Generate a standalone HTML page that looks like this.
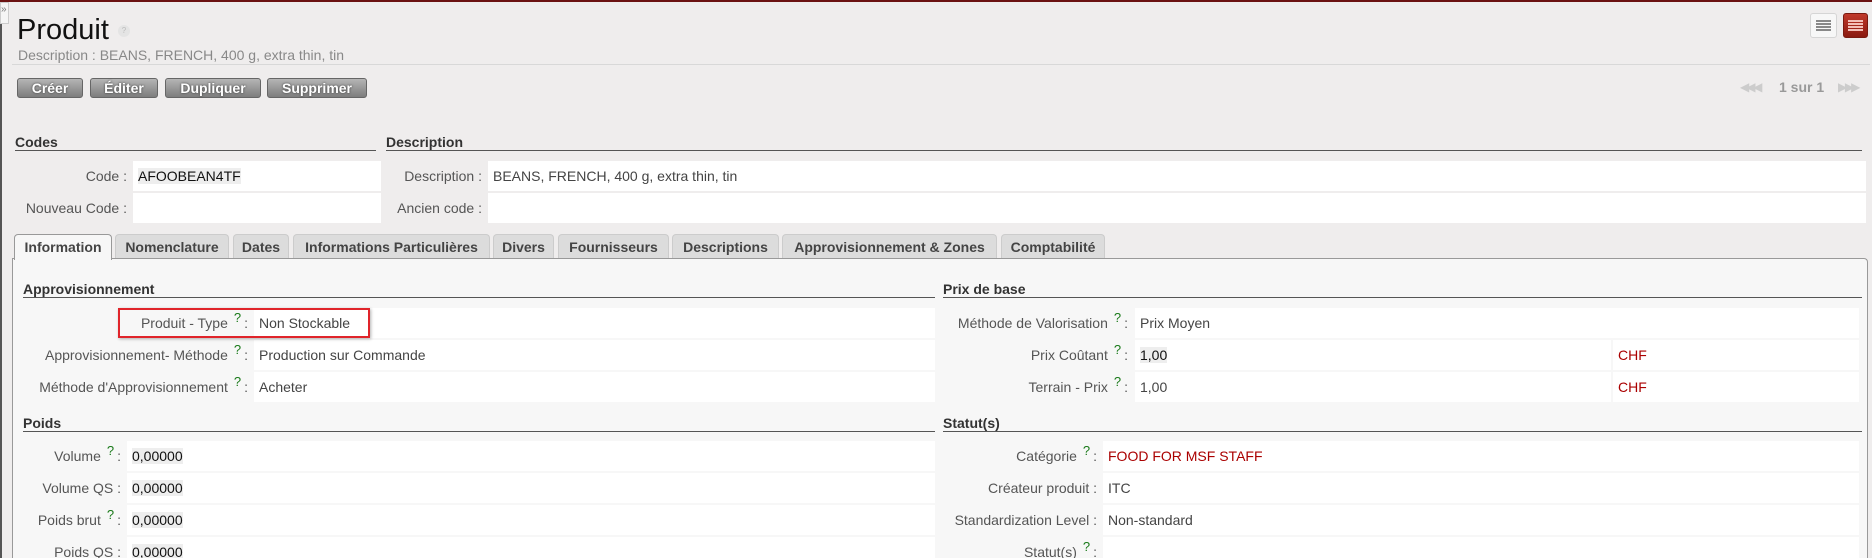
<!DOCTYPE html>
<html><head><meta charset="utf-8">
<style>
*{margin:0;padding:0;box-sizing:border-box}
html{overflow:hidden;height:558px}
body{width:1872px;height:558px;overflow:hidden;background:#efeded;font-family:"Liberation Sans",Arial,sans-serif;position:relative;color:#444}
.a{position:absolute}
.btn{position:absolute;top:78px;height:20px;border:1px solid #666;border-radius:3px;background:linear-gradient(#b5b5b5,#7d7d7d);color:#fff;font-weight:bold;font-size:14px;text-align:center;line-height:18px;text-shadow:0 0 2px #333}
.h{position:absolute;font-weight:bold;font-size:14px;color:#333;border-bottom:1px solid #555;height:15px;line-height:12px}
.lab{position:absolute;font-size:14px;color:#555;text-align:right;height:30px;line-height:30px;white-space:nowrap}
.val{position:absolute;background:#fff;font-size:14px;color:#444;height:30px;line-height:30px;padding-left:5px;white-space:nowrap}
.q{color:#1a7a1a;font-size:13px;position:relative;top:-6px;margin:0 3px 0 6px}
.hl{background:#eee;color:#111}
.tab{position:absolute;top:234px;height:24px;background:#dcdcdc;border:1px solid #ccc;border-bottom:none;border-radius:4px 4px 0 0;font-weight:bold;font-size:14px;color:#444;line-height:24px;text-align:center}
</style></head><body>
<div class="a" style="left:0;top:0;width:1872px;height:2px;background:#6b1212"></div>
<div class="a" style="left:0;top:2px;width:2px;height:556px;background:#555"></div>
<div class="a" style="left:0;top:2px;width:9px;height:22px;background:#f5f5f5;border:1px solid #ccc;font-size:10px;color:#777;line-height:14px">»</div>

<div class="a" style="left:17px;top:14px;font-size:29px;color:#111">Produit</div>
<div class="a" style="left:118px;top:25px;width:12px;height:12px;border-radius:6px;background:#e4e4e4;color:#bbb;font-size:8px;text-align:center;line-height:12px">?</div>
<div class="a" style="left:18px;top:47px;font-size:14px;color:#888">Description : BEANS, FRENCH, 400 g, extra thin, tin</div>
<div class="a" style="left:12px;top:64px;width:1858px;height:1px;background:#d8d8d8"></div>
<div class="a" style="left:1810px;top:13px;width:27px;height:25px;background:#f7f7f7;border:1px solid #d5d5d5;border-radius:3px"><div style="margin:6px 5px;height:12px;background:repeating-linear-gradient(#888 0 2px,transparent 2px 3px)"></div></div>
<div class="a" style="left:1843px;top:13px;width:25px;height:25px;background:linear-gradient(#c0392b,#8a1a10);border:1px solid #7a1a10;border-radius:3px"><div style="margin:6px 4px;height:12px;background:repeating-linear-gradient(#f3c0b8 0 2px,transparent 2px 3px)"></div></div>

<div class="btn" style="left:17px;width:66px">Créer</div>
<div class="btn" style="left:90px;width:68px">Éditer</div>
<div class="btn" style="left:165px;width:96px">Dupliquer</div>
<div class="btn" style="left:267px;width:100px">Supprimer</div>

<div class="a" style="left:1740px;top:80px;font-size:12px;color:#ccc;letter-spacing:-3px">◀◀ &nbsp;◀</div>
<div class="a" style="left:1779px;top:79px;font-size:14px;font-weight:bold;color:#999">1 sur 1</div>
<div class="a" style="left:1838px;top:80px;font-size:12px;color:#ccc;letter-spacing:-3px">▶ &nbsp;▶▶</div>

<div class="h" style="left:15px;top:136px;width:361px">Codes</div>
<div class="h" style="left:386px;top:136px;width:1476px">Description</div>
<div class="lab" style="left:15px;top:161px;width:112px">Code :</div>
<div class="val" style="left:133px;top:161px;width:248px"><span class="hl">AFOOBEAN4TF</span></div>
<div class="lab" style="left:15px;top:193px;width:112px">Nouveau Code :</div>
<div class="val" style="left:133px;top:193px;width:248px"></div>
<div class="lab" style="left:386px;top:161px;width:96px">Description :</div>
<div class="val" style="left:488px;top:161px;width:1378px">BEANS, FRENCH, 400 g, extra thin, tin</div>
<div class="lab" style="left:386px;top:193px;width:96px">Ancien code :</div>
<div class="val" style="left:488px;top:193px;width:1378px"></div>

<div class="a" style="left:12px;top:258px;width:1856px;height:300px;background:#f7f7f7;border:1px solid #999;border-bottom:none;border-radius:0 4px 0 0"></div>
<div class="tab" style="left:14px;width:98px;height:26px;background:#f7f7f7;border-color:#999">Information</div>
<div class="tab" style="left:115px;width:114px">Nomenclature</div>
<div class="tab" style="left:233px;width:56px">Dates</div>
<div class="tab" style="left:293px;width:197px">Informations Particulières</div>
<div class="tab" style="left:493px;width:61px">Divers</div>
<div class="tab" style="left:558px;width:111px">Fournisseurs</div>
<div class="tab" style="left:672px;width:107px">Descriptions</div>
<div class="tab" style="left:782px;width:215px">Approvisionnement &amp; Zones</div>
<div class="tab" style="left:1001px;width:104px">Comptabilité</div>

<div class="h" style="left:23px;top:283px;width:912px">Approvisionnement</div>
<div class="h" style="left:943px;top:283px;width:919px">Prix de base</div>
<div class="lab" style="left:20px;top:308px;width:228px">Produit - Type<span class="q">?</span>:</div>
<div class="val" style="left:254px;top:308px;width:681px">Non Stockable</div>
<div class="lab" style="left:20px;top:340px;width:228px">Approvisionnement- Méthode<span class="q">?</span>:</div>
<div class="val" style="left:254px;top:340px;width:681px">Production sur Commande</div>
<div class="lab" style="left:20px;top:372px;width:228px">Méthode d'Approvisionnement<span class="q">?</span>:</div>
<div class="val" style="left:254px;top:372px;width:681px">Acheter</div>
<div class="a" style="left:118px;top:308px;width:252px;height:30px;border:2px solid #e0242a;box-shadow:1px 1px 3px rgba(0,0,0,.3)"></div>

<div class="lab" style="left:940px;top:308px;width:188px">Méthode de Valorisation<span class="q">?</span>:</div>
<div class="val" style="left:1135px;top:308px;width:724px">Prix Moyen</div>
<div class="lab" style="left:940px;top:340px;width:188px">Prix Coûtant<span class="q">?</span>:</div>
<div class="val" style="left:1135px;top:340px;width:476px"><span class="hl">1,00</span></div>
<div class="val" style="left:1613px;top:340px;width:246px;color:#a00">CHF</div>
<div class="lab" style="left:940px;top:372px;width:188px">Terrain - Prix<span class="q">?</span>:</div>
<div class="val" style="left:1135px;top:372px;width:476px">1,00</div>
<div class="val" style="left:1613px;top:372px;width:246px;color:#a00">CHF</div>

<div class="h" style="left:23px;top:417px;width:912px">Poids</div>
<div class="h" style="left:943px;top:417px;width:919px">Statut(s)</div>
<div class="lab" style="left:15px;top:441px;width:106px">Volume<span class="q">?</span>:</div>
<div class="val" style="left:127px;top:441px;width:808px"><span class="hl">0,00000</span></div>
<div class="lab" style="left:15px;top:473px;width:106px">Volume QS :</div>
<div class="val" style="left:127px;top:473px;width:808px"><span class="hl">0,00000</span></div>
<div class="lab" style="left:15px;top:505px;width:106px">Poids brut<span class="q">?</span>:</div>
<div class="val" style="left:127px;top:505px;width:808px"><span class="hl">0,00000</span></div>
<div class="lab" style="left:15px;top:537px;width:106px;height:21px;overflow:hidden">Poids QS :</div>
<div class="val" style="left:127px;top:537px;width:808px;height:21px;overflow:hidden"><span class="hl">0,00000</span></div>

<div class="lab" style="left:940px;top:441px;width:157px">Catégorie<span class="q">?</span>:</div>
<div class="val" style="left:1103px;top:441px;width:756px;color:#a00">FOOD FOR MSF STAFF</div>
<div class="lab" style="left:940px;top:473px;width:157px">Créateur produit :</div>
<div class="val" style="left:1103px;top:473px;width:756px">ITC</div>
<div class="lab" style="left:940px;top:505px;width:157px">Standardization Level :</div>
<div class="val" style="left:1103px;top:505px;width:756px">Non-standard</div>
<div class="lab" style="left:940px;top:537px;width:157px;height:21px;overflow:hidden">Statut(s)<span class="q">?</span>:</div>
<div class="val" style="left:1103px;top:537px;width:756px;height:21px"></div>
</body></html>
